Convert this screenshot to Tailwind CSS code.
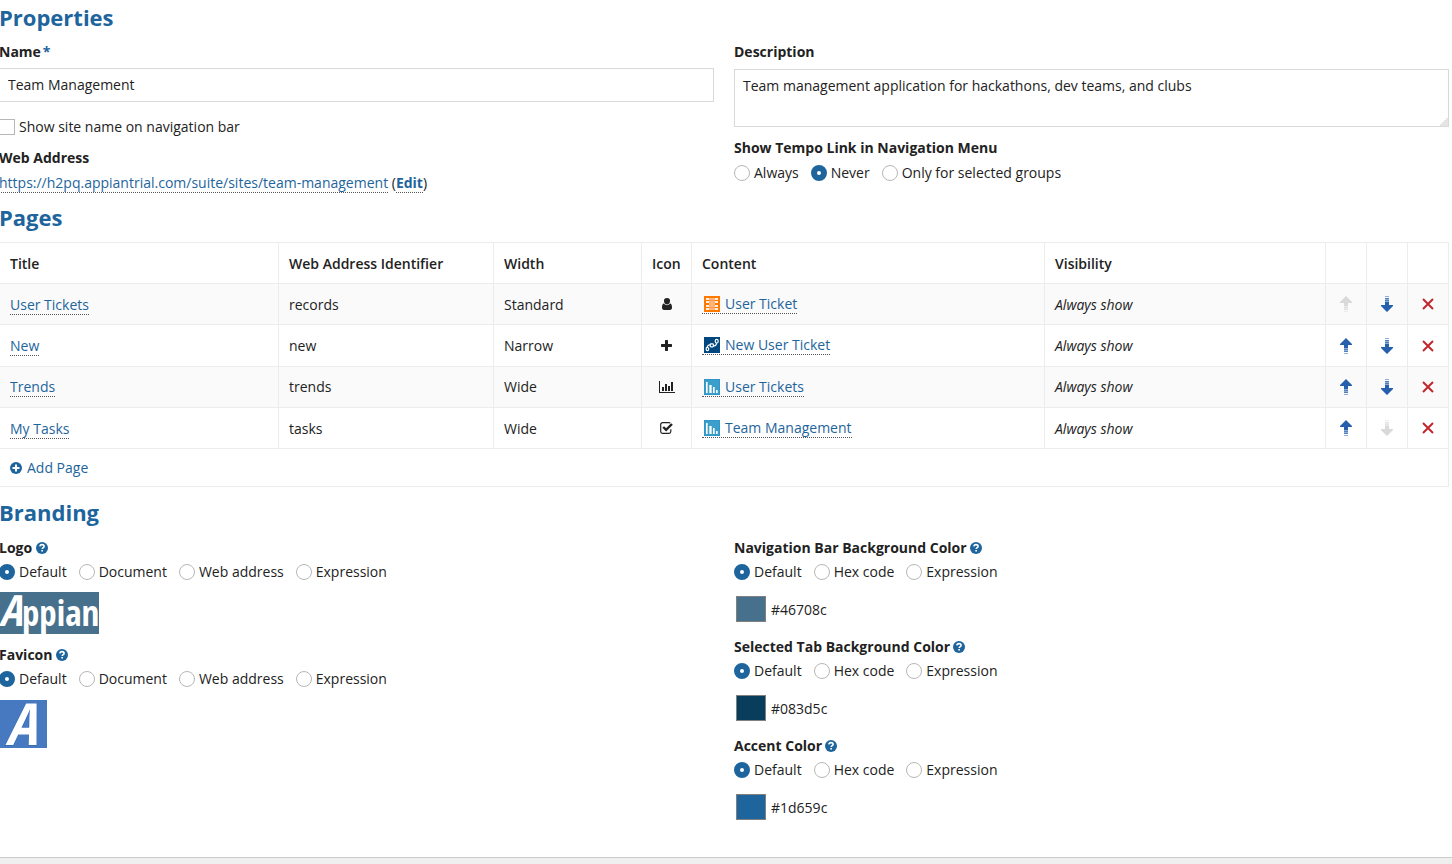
<!DOCTYPE html>
<html lang="en">
<head>
<meta charset="utf-8">
<title>Team Management - Site</title>
<script src="https://cdn.jsdelivr.net/npm/@tailwindcss/browser@4"></script>
</head>
<body class="overflow-x-hidden bg-white font-['Open_Sans',sans-serif] text-[14px] leading-5 text-[#222]">
<svg class="hidden" aria-hidden="true">
  <symbol id="help" viewBox="0 0 12 12"><circle cx="6" cy="6" r="6" fill="#1d659c"/><path d="M3.900 4.400C4 3.200 4.900 2.600 6 2.600c1.200 0 2.100.7 2.100 1.800C8.100 5.700 6.200 5.700 6.200 7.100" fill="none" stroke="#fff" stroke-width="1.600"/><path d="M5.300 8h1.700v1.600H5.300z" fill="#fff"/></symbol>
  <symbol id="up" viewBox="0 0 12 16"><path d="M6 0l6 6v1H8v3H4V7H0V6z"/><path d="M4 11h4v1H4zM4 13h4v1H4z" opacity=".8"/><path d="M4 10h4v1H4zM4 12h4v1H4zM4 15h4v1H4z" opacity=".5"/></symbol>
  <symbol id="down" viewBox="0 0 12 16"><path d="M6 16l6-6V9H8V6H4v3H0v1z"/><path d="M4 4h4v1H4zM4 2h4v1H4z" opacity=".8"/><path d="M4 5h4v1H4zM4 3h4v1H4zM4 0h4v1H4z" opacity=".5"/></symbol>
  <symbol id="remove" viewBox="0 0 12 12"><path d="M1 1l10 10M11 1L1 11" fill="none" stroke="#c1272d" stroke-width="2"/></symbol>
  <symbol id="report" viewBox="0 0 16 16"><path fill="#2f96c6" d="M0 0h16v16H0z"/><path fill="#3a9fca" d="M1 1h14v14H1z"/><path d="M2 3h2v11H2zM5 6h3v8H5zM9 8h2v6H9zM12 11h2v3h-2z" fill="#b9dded"/><path d="M2 3h1v11H2zM6 6h1v8H6zM9 8h1v6H9zM12 11h1v3h-1z" fill="#fff"/></symbol>
</svg>

<main class="-ml-px mr-[3px] pb-[36px] pt-[2px]">
  <h2 class="text-[22px] font-bold leading-[30px] text-[#1d659c]">Properties</h2>
  <div class="mt-[10px] grid grid-cols-2 gap-5">
    <div>
      <label for="name" class="block font-bold">Name<span class="ml-[2px] text-[#1d659c]">*</span></label>
      <input id="name" type="text" value="Team Management" class="mt-[6px] block h-[34px] w-full border border-[#d9d9d9] px-2 pb-[2px] outline-none">
      <div class="mt-[15px] flex items-center gap-1">
        <input id="showname" type="checkbox" class="size-4 appearance-none border border-[#b7b7b7] bg-white checked:bg-[#1d659c]">
        <label for="showname">Show site name on navigation bar</label>
      </div>
      <h3 class="mt-[11px] font-bold">Web Address</h3>
      <p class="mt-[5px]"><a href="#" class="border-b border-dotted border-[#555] text-[#1d659c]">https://h2pq.appiantrial.com/suite/sites/team-management</a> (<a href="#" class="border-b border-dotted border-[#555] font-bold text-[#1d659c]">Edit</a>)</p>
    </div>
    <div>
      <label for="desc" class="block font-bold">Description</label>
      <div class="relative mt-[7px]">
        <textarea id="desc" class="block h-[58px] w-full resize-none border border-[#d9d9d9] px-2 py-[6px] outline-none">Team management application for hackathons, dev teams, and clubs</textarea>
        <svg class="absolute bottom-px right-px size-2 fill-[#e4e4e4]" viewBox="0 0 8 8" aria-hidden="true"><path d="M8 0v8H0V6h2V4h2V2h2V0z"/></svg>
      </div>
      <fieldset class="mt-[11px]">
        <legend class="font-bold">Show Tempo Link in Navigation Menu</legend>
        <div class="mt-[5px] flex gap-3">
          <label class="flex items-center gap-1"><input type="radio" name="tempo" class="size-4 appearance-none rounded-full border border-[#b7b7b7] checked:border-6 checked:border-[#1d659c]">Always</label>
          <label class="flex items-center gap-1"><input type="radio" name="tempo" checked class="size-4 appearance-none rounded-full border border-[#b7b7b7] checked:border-6 checked:border-[#1d659c]">Never</label>
          <label class="flex items-center gap-1"><input type="radio" name="tempo" class="size-4 appearance-none rounded-full border border-[#b7b7b7] checked:border-6 checked:border-[#1d659c]">Only for selected groups</label>
        </div>
      </fieldset>
    </div>
  </div>

  <h2 class="mt-[9px] text-[22px] font-bold leading-[30px] text-[#1d659c]">Pages</h2>
  <table class="mt-[10px] w-full table-fixed border-collapse border border-[#ececec] text-left [&_td]:border [&_td]:border-[#ececec] [&_td]:px-[10px] [&_th]:border [&_th]:border-[#ececec] [&_th]:px-[10px] [&_th]:pt-px [&_th]:font-semibold">
    <colgroup><col class="w-[279px]"><col class="w-[215px]"><col class="w-[148px]"><col class="w-[50px]"><col><col class="w-[281px]"><col class="w-[41px]"><col class="w-[41px]"><col class="w-[41px]"></colgroup>
    <thead>
      <tr class="h-[41px]"><th>Title</th><th>Web Address Identifier</th><th>Width</th><th>Icon</th><th>Content</th><th>Visibility</th><th></th><th></th><th></th></tr>
    </thead>
    <tbody>
      <tr class="h-[41px] bg-[#fafafa]">
        <td class="pt-px"><a href="#" class="border-b border-dotted border-[#555] text-[#1d659c]">User Tickets</a></td><td class="pt-px">records</td><td class="pt-px">Standard</td>
        <td><svg class="mx-auto h-3 w-[10px]" viewBox="0 0 10 12" fill="#222"><path d="M5 0a3 3 0 0 1 3 3.200C8 5 6.700 6.500 5 6.500S2 5 2 3.200A3 3 0 0 1 5 0zM2 5.600C2.800 6.700 3.800 7.300 5 7.300s2.200-.6 3-1.700c1.500.2 2 1.600 2 4.200 0 1.300-.8 2.200-2 2.200H2c-1.200 0-2-.9-2-2.200 0-2.600.5-4 2-4.200z"/></svg></td>
        <td><a href="#" class="flex w-fit items-center gap-[5px] border-b border-dotted border-[#555] pl-[2px] leading-[18px] text-[#1d659c]"><svg class="size-4" viewBox="0 0 16 16"><path fill="#ff7800" d="M0 0h16v16H0z"/><path fill="#fff0e2" d="M2 2h3v2H2zM2 5h3v2H2zM2 9h3v2H2zM2 12h3v2H2zM11 2h3v2h-3zM11 5h3v2h-3zM11 9h3v2h-3zM11 12h3v2h-3z"/><path fill="#ffb478" d="M5 2h6v12H5z"/><path fill="#ff9a45" d="M5 4h6v1H5zM5 11h6v1H5z"/></svg>User Ticket</a></td>
        <td class="pt-px italic">Always show</td>
        <td><button type="button" disabled aria-label="Move up" class="mx-auto block fill-[#d9d9d9]"><svg class="h-4 w-3"><use href="#up"/></svg></button></td>
        <td><button type="button" aria-label="Move down" class="mx-auto block fill-[#2660ad]"><svg class="h-4 w-3"><use href="#down"/></svg></button></td>
        <td><button type="button" aria-label="Remove" class="mx-auto block"><svg class="size-3"><use href="#remove"/></svg></button></td>
      </tr>
      <tr class="h-[42px]">
        <td><a href="#" class="border-b border-dotted border-[#555] text-[#1d659c]">New</a></td><td>new</td><td>Narrow</td>
        <td><svg class="mx-auto size-[11px]" viewBox="0 0 11 11" fill="#222"><path d="M4.500 0h2l.5.5V4h3.500l.5.5v2l-.5.5H7v3.500l-.5.5h-2l-.5-.5V7H.5L0 6.500v-2L.5 4H4V.5z"/></svg></td>
        <td><a href="#" class="flex w-fit items-center gap-[5px] border-b border-dotted border-[#555] pl-[2px] leading-[18px] text-[#1d659c]"><svg class="size-4" viewBox="0 0 16 16"><path fill="#00467f" d="M0 0h16v16H0z"/><g fill="none" stroke="#fff" stroke-width="1.200"><ellipse cx="3.400" cy="12" rx="1.300" ry="1.700"/><path d="M3.200 10.200C3.300 8.500 4.500 7.800 6.200 8M9.600 8.700c1.900.4 2.900-.6 2.900-2.600"/><rect x="6.200" y="6.900" width="3.200" height="3" rx=".8"/><ellipse cx="12.700" cy="4.200" rx="1.500" ry="1.800"/></g></svg>New User Ticket</a></td>
        <td class="italic">Always show</td>
        <td><button type="button" aria-label="Move up" class="mx-auto block fill-[#2660ad]"><svg class="h-4 w-3"><use href="#up"/></svg></button></td>
        <td><button type="button" aria-label="Move down" class="mx-auto block fill-[#2660ad]"><svg class="h-4 w-3"><use href="#down"/></svg></button></td>
        <td><button type="button" aria-label="Remove" class="mx-auto block"><svg class="size-3"><use href="#remove"/></svg></button></td>
      </tr>
      <tr class="h-[41px] bg-[#fafafa]">
        <td><a href="#" class="border-b border-dotted border-[#555] text-[#1d659c]">Trends</a></td><td>trends</td><td>Wide</td>
        <td><svg class="mx-auto h-3 w-4" viewBox="0 0 16 12" fill="#222"><path d="M0 0h1v11h15v1H0zM3 6h2v4H3zM6 3h2v7H6zM9 5h2v5H9zM12 1h2v9h-2z"/></svg></td>
        <td><a href="#" class="flex w-fit items-center gap-[5px] border-b border-dotted border-[#555] pl-[2px] leading-[18px] text-[#1d659c]"><svg class="size-4"><use href="#report"/></svg>User Tickets</a></td>
        <td class="italic">Always show</td>
        <td><button type="button" aria-label="Move up" class="mx-auto block fill-[#2660ad]"><svg class="h-4 w-3"><use href="#up"/></svg></button></td>
        <td><button type="button" aria-label="Move down" class="mx-auto block fill-[#2660ad]"><svg class="h-4 w-3"><use href="#down"/></svg></button></td>
        <td><button type="button" aria-label="Remove" class="mx-auto block"><svg class="size-3"><use href="#remove"/></svg></button></td>
      </tr>
      <tr class="h-[41px]">
        <td class="pt-px"><a href="#" class="border-b border-dotted border-[#555] text-[#1d659c]">My Tasks</a></td><td class="pt-px">tasks</td><td class="pt-px">Wide</td>
        <td><svg class="mx-auto h-3 w-[13px]" viewBox="0 0 13 12" fill="none" stroke="#222"><path d="M10.300 1.200Q9.800.7 9 .7H2.500A1.800 1.800 0 0 0 .7 2.500v7a1.800 1.800 0 0 0 1.800 1.800H9a1.800 1.800 0 0 0 1.800-1.800V7.300" stroke-width="1.200"/><path d="M3.200 5l2.900 2.900L12 2" stroke-width="2.400"/></svg></td>
        <td><a href="#" class="flex w-fit items-center gap-[5px] border-b border-dotted border-[#555] pl-[2px] leading-[18px] text-[#1d659c]"><svg class="size-4"><use href="#report"/></svg>Team Management</a></td>
        <td class="pt-px italic">Always show</td>
        <td><button type="button" aria-label="Move up" class="mx-auto block fill-[#2660ad]"><svg class="h-4 w-3"><use href="#up"/></svg></button></td>
        <td><button type="button" disabled aria-label="Move down" class="mx-auto block fill-[#d9d9d9]"><svg class="h-4 w-3"><use href="#down"/></svg></button></td>
        <td><button type="button" aria-label="Remove" class="mx-auto block"><svg class="size-3"><use href="#remove"/></svg></button></td>
      </tr>
    </tbody>
    <tfoot>
      <tr class="h-[38px]"><td colspan="9"><button type="button" class="flex items-center gap-[5px] text-[#1d659c]"><svg class="size-3" viewBox="0 0 12 12"><circle cx="6" cy="6" r="6" fill="#1d659c"/><path d="M6 2.500v7M2.500 6h7" stroke="#fff" stroke-width="2"/></svg>Add Page</button></td></tr>
    </tfoot>
  </table>

  <h2 class="mt-[10px] text-[22px] font-bold leading-[30px] text-[#1d659c]">Branding</h2>
  <div class="mt-[11px] grid grid-cols-2 gap-5">
    <div>
      <fieldset>
        <legend class="flex items-center gap-1 font-bold">Logo <svg class="size-3" role="img" aria-label="Help"><use href="#help"/></svg></legend>
        <div class="mt-1 flex gap-3">
          <label class="flex items-center gap-1"><input type="radio" name="logo" checked class="size-4 appearance-none rounded-full border border-[#b7b7b7] checked:border-6 checked:border-[#1d659c]">Default</label>
          <label class="flex items-center gap-1"><input type="radio" name="logo" class="size-4 appearance-none rounded-full border border-[#b7b7b7] checked:border-6 checked:border-[#1d659c]">Document</label>
          <label class="flex items-center gap-1"><input type="radio" name="logo" class="size-4 appearance-none rounded-full border border-[#b7b7b7] checked:border-6 checked:border-[#1d659c]">Web address</label>
          <label class="flex items-center gap-1"><input type="radio" name="logo" class="size-4 appearance-none rounded-full border border-[#b7b7b7] checked:border-6 checked:border-[#1d659c]">Expression</label>
        </div>
      </fieldset>
      <svg class="mt-[10px] block h-[42px] w-[100px] overflow-visible bg-[#46708c]" viewBox="0 0 100 42" role="img" aria-label="Appian"><text x="0" y="34" font-family="'Open Sans Condensed','Roboto Condensed','Liberation Sans Narrow',sans-serif" font-weight="700" font-size="35" fill="#fff"><tspan font-style="italic" font-size="43">A</tspan>ppian</text></svg>
      <fieldset class="mt-[11px]">
        <legend class="flex items-center gap-1 font-bold">Favicon <svg class="size-3" role="img" aria-label="Help"><use href="#help"/></svg></legend>
        <div class="mt-1 flex gap-3">
          <label class="flex items-center gap-1"><input type="radio" name="favicon" checked class="size-4 appearance-none rounded-full border border-[#b7b7b7] checked:border-6 checked:border-[#1d659c]">Default</label>
          <label class="flex items-center gap-1"><input type="radio" name="favicon" class="size-4 appearance-none rounded-full border border-[#b7b7b7] checked:border-6 checked:border-[#1d659c]">Document</label>
          <label class="flex items-center gap-1"><input type="radio" name="favicon" class="size-4 appearance-none rounded-full border border-[#b7b7b7] checked:border-6 checked:border-[#1d659c]">Web address</label>
          <label class="flex items-center gap-1"><input type="radio" name="favicon" class="size-4 appearance-none rounded-full border border-[#b7b7b7] checked:border-6 checked:border-[#1d659c]">Expression</label>
        </div>
      </fieldset>
      <svg class="mt-[11px] block size-12 overflow-visible bg-[#4679bf]" viewBox="0 0 48 48" role="img" aria-label="Favicon"><text x="22" y="45" text-anchor="middle" font-family="'Open Sans Condensed','Roboto Condensed','Liberation Sans Narrow',sans-serif" font-style="italic" font-weight="700" font-size="58" fill="#fff" stroke="#2c62b4" stroke-width="1" paint-order="stroke">A</text></svg>
    </div>
    <div class="flex flex-col gap-[15px]">
      <fieldset>
        <legend class="flex items-center gap-[3px] font-bold">Navigation Bar Background Color <svg class="size-3" role="img" aria-label="Help"><use href="#help"/></svg></legend>
        <div class="mt-1 flex gap-3">
          <label class="flex items-center gap-1"><input type="radio" name="nav" checked class="size-4 appearance-none rounded-full border border-[#b7b7b7] checked:border-6 checked:border-[#1d659c]">Default</label>
          <label class="flex items-center gap-1"><input type="radio" name="nav" class="size-4 appearance-none rounded-full border border-[#b7b7b7] checked:border-6 checked:border-[#1d659c]">Hex code</label>
          <label class="flex items-center gap-1"><input type="radio" name="nav" class="size-4 appearance-none rounded-full border border-[#b7b7b7] checked:border-6 checked:border-[#1d659c]">Expression</label>
        </div>
        <div class="mt-[14px] flex items-center gap-[5px] pl-[2px]"><span class="h-[26px] w-[30px] border border-[#808080] bg-[#46708c]"></span><span class="pt-px">#46708c</span></div>
      </fieldset>
      <fieldset>
        <legend class="flex items-center gap-[3px] font-bold">Selected Tab Background Color <svg class="size-3" role="img" aria-label="Help"><use href="#help"/></svg></legend>
        <div class="mt-1 flex gap-3">
          <label class="flex items-center gap-1"><input type="radio" name="tab" checked class="size-4 appearance-none rounded-full border border-[#b7b7b7] checked:border-6 checked:border-[#1d659c]">Default</label>
          <label class="flex items-center gap-1"><input type="radio" name="tab" class="size-4 appearance-none rounded-full border border-[#b7b7b7] checked:border-6 checked:border-[#1d659c]">Hex code</label>
          <label class="flex items-center gap-1"><input type="radio" name="tab" class="size-4 appearance-none rounded-full border border-[#b7b7b7] checked:border-6 checked:border-[#1d659c]">Expression</label>
        </div>
        <div class="mt-[14px] flex items-center gap-[5px] pl-[2px]"><span class="h-[26px] w-[30px] border border-[#808080] bg-[#083d5c]"></span><span class="pt-px">#083d5c</span></div>
      </fieldset>
      <fieldset>
        <legend class="flex items-center gap-[3px] font-bold">Accent Color <svg class="size-3" role="img" aria-label="Help"><use href="#help"/></svg></legend>
        <div class="mt-1 flex gap-3">
          <label class="flex items-center gap-1"><input type="radio" name="accent" checked class="size-4 appearance-none rounded-full border border-[#b7b7b7] checked:border-6 checked:border-[#1d659c]">Default</label>
          <label class="flex items-center gap-1"><input type="radio" name="accent" class="size-4 appearance-none rounded-full border border-[#b7b7b7] checked:border-6 checked:border-[#1d659c]">Hex code</label>
          <label class="flex items-center gap-1"><input type="radio" name="accent" class="size-4 appearance-none rounded-full border border-[#b7b7b7] checked:border-6 checked:border-[#1d659c]">Expression</label>
        </div>
        <div class="mt-[14px] flex items-center gap-[5px] pl-[2px]"><span class="h-[26px] w-[30px] border border-[#808080] bg-[#1d659c]"></span><span class="pt-px">#1d659c</span></div>
      </fieldset>
    </div>
  </div>
</main>
<footer class="mt-px h-[7px] border-t border-[#ccc] bg-[#efefef]"></footer>
</body>
</html>
